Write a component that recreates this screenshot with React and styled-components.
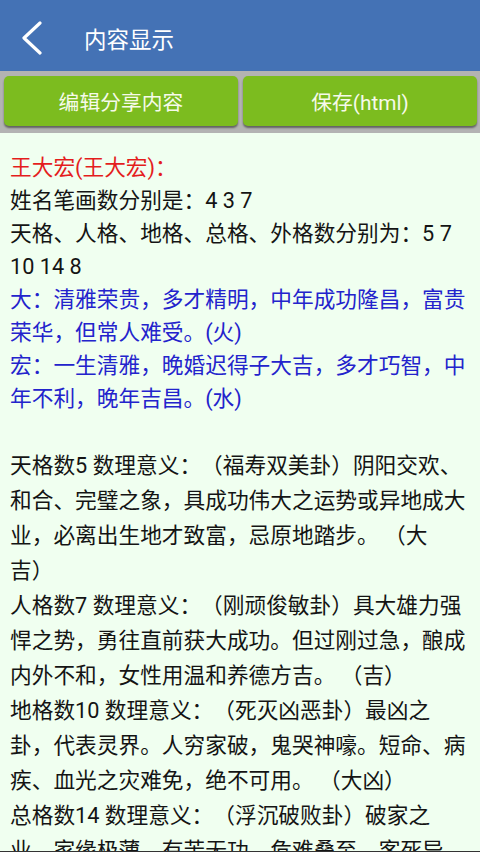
import React from 'react'
import styled, { createGlobalStyle } from 'styled-components'

const GlobalStyle = createGlobalStyle`
  html, body {
    margin: 0;
    padding: 0;
    background: #f0fff0;
  }
  body {
    font-family: Roboto, "Noto Sans CJK SC", sans-serif;
    text-spacing-trim: space-all;
  }
`

const upperLines = [
    { text: '王大宏(王大宏)：', tone: 'red' },
    { text: '姓名笔画数分别是：4 3 7' },
    { text: '天格、人格、地格、总格、外格数分别为：5 7 10 14 8' },
    { text: '大：清雅荣贵，多才精明，中年成功隆昌，富贵荣华，但常人难受。(火)', tone: 'blue' },
    { text: '宏：一生清雅，晚婚迟得子大吉，多才巧智，中年不利，晚年吉昌。(水)', tone: 'blue' },
]

const lowerLines = [
    '天格数5 数理意义：（福寿双美卦）阴阳交欢、和合、完璧之象，具成功伟大之运势或异地成大业，必离出生地才致富，忌原地踏步。 （大吉）',
    '人格数7 数理意义：（刚顽俊敏卦）具大雄力强悍之势，勇往直前获大成功。但过刚过急，酿成内外不和，女性用温和养德方吉。 （吉）',
    '地格数10 数理意义：（死灭凶恶卦）最凶之卦，代表灵界。人穷家破，鬼哭神嚎。短命、病疾、血光之灾难免，绝不可用。 （大凶）',
    '总格数14 数理意义：（浮沉破败卦）破家之业，家缘极薄，有苦无功，危难叠至，客死异乡。 （大凶）',
]

const App = () => {
    return (
        <Page>
            <GlobalStyle />
            <Header>
                <BackButton aria-label="back">
                    <svg width="22" height="34" viewBox="0 0 22 34">
                        <polyline points="19,2 3,17 19,32" fill="none" stroke="#fff" strokeWidth="3.2" strokeLinecap="round" strokeLinejoin="round" />
                    </svg>
                </BackButton>
                <Title>内容显示</Title>
            </Header>
            <ActionBar>
                <ActionButton>编辑分享内容</ActionButton>
                <ActionButton>保存(html)</ActionButton>
            </ActionBar>
            <Content>
                <UpperBlock>
                    {upperLines.map((line, i) => (
                        <Line key={i} tone={line.tone}>{line.text}</Line>
                    ))}
                    <BlankLine />
                </UpperBlock>
                <LowerBlock>
                    {lowerLines.map((line, i) => (
                        <Line key={i}>{line}</Line>
                    ))}
                </LowerBlock>
            </Content>
            <BottomEdge />
        </Page>
    )
}

export default App

const Page = styled.div`
height: 852px;
display: flex;
flex-direction: column;
overflow: hidden;
background-color: #f0fff0;
`;

const Header = styled.div`
flex: 0 0 71px;
display: flex;
align-items: center;
padding-top: 5px;
box-sizing: border-box;
background-color: #4472b5;
`;

const BackButton = styled.div`
width: 22px;
height: 34px;
margin-left: 21px;
display: flex;
`;

const Title = styled.h1`
margin: 0 0 0 41px;
font-size: 22.5px;
font-weight: 400;
color: #ffffff;
`;

const ActionBar = styled.div`
flex: 0 0 62px;
box-sizing: border-box;
display: flex;
gap: 5px;
padding: 5px 3px 7px 4px;
background-color: #b3b3b3;
`;

const ActionButton = styled.button`
flex: 1;
border: none;
border-radius: 5px;
background-color: #7cbc1f;
box-shadow: 0 2px 2px rgba(0, 0, 0, 0.45);
color: #f6faea;
font-family: Roboto, "Noto Sans CJK SC", sans-serif;
font-size: 20.8px;
padding: 0;
`;

const Content = styled.div`
flex: 1;
overflow: hidden;
padding: 18px 10px 0;
font-size: 21.7px;
color: #141414;
text-spacing-trim: space-all;
`;

const UpperBlock = styled.div`
line-height: 33px;
`;

const LowerBlock = styled.div`
line-height: 35px;
`;

const Line = styled.div`
color: ${p => p.tone === 'red' ? '#e41d1d' : p.tone === 'blue' ? '#2323cc' : 'inherit'};
`;

const BlankLine = styled.div`
height: 33px;
`;

const BottomEdge = styled.div`
flex: 0 0 1px;
background-color: #333333;
`;
